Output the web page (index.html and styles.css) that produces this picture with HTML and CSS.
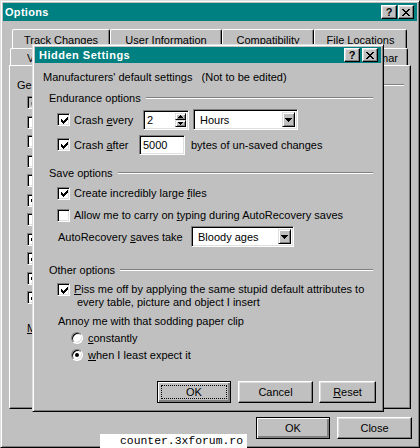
FILE: index.html
```html
<!DOCTYPE html>
<html>
<head>
<meta charset="utf-8">
<title>Options</title>
<link rel="stylesheet" href="styles.css">
</head>
<body>
<div class="screen">
  <div class="win">
    <div class="titlebar">
      <span class="title">Options</span>
      <div class="tbtns">
        <span class="tbtn">?</span>
        <span class="tbtn"><svg width="8" height="7" viewBox="0 0 8 7" shape-rendering="crispEdges"><path d="M0 0h2v1h-2zM6 0h2v1h-2zM1 1h2v1h-2zM5 1h2v1h-2zM2 2h4v1h-4zM3 3h2v1h-2zM2 4h4v1h-4zM1 5h2v1h-2zM5 5h2v1h-2zM0 6h2v1h-2zM6 6h2v1h-2z" fill="#000"/></svg></span>
      </div>
    </div>
    <div class="tabrow back">
      <div class="tab t-track">Track Changes</div>
      <div class="tab t-user">User Information</div>
      <div class="tab t-compat">Compatibility</div>
      <div class="tab t-files">File Locations</div>
    </div>
    <div class="tabrow front">
      <div class="tab t-view"><span class="clip c-view">View</span></div>
      <div class="tab t-general"></div>
      <div class="tab t-edit"></div>
      <div class="tab t-print"></div>
      <div class="tab t-save"></div>
      <div class="tab t-spell"><span class="clip c-spell"><span class="spell-txt">Spelling &amp; Grammar</span></span></div>
    </div>
    <div class="panel">
      <div class="grouphead gen"><span class="clip c-gen">General options</span><div class="etch"></div></div>
      <div class="optlist">
        <div class="opt"><span class="cb off"><svg class="chk" viewBox="0 0 7 7" width="7" height="7" shape-rendering="crispEdges"><path d="M6 0h1v1h-1zM5 1h2v1h-2zM0 2h1v1h-1zM4 2h3v1h-3zM0 3h2v1h-2zM3 3h3v1h-3zM0 4h5v1h-5zM1 5h3v1h-3zM2 6h1v1h-1z"/></svg></span></div>
        <div class="opt"><span class="cb"></span></div>
        <div class="opt"><span class="cb"></span></div>
        <div class="opt"><span class="cb"></span></div>
        <div class="opt"><span class="cb"></span></div>
        <div class="opt"><span class="cb"><svg class="chk" viewBox="0 0 7 7" width="7" height="7" shape-rendering="crispEdges"><path d="M6 0h1v1h-1zM5 1h2v1h-2zM0 2h1v1h-1zM4 2h3v1h-3zM0 3h2v1h-2zM3 3h3v1h-3zM0 4h5v1h-5zM1 5h3v1h-3zM2 6h1v1h-1z"/></svg></span></div>
        <div class="opt"><span class="cb"></span></div>
        <div class="opt"><span class="cb"><svg class="chk" viewBox="0 0 7 7" width="7" height="7" shape-rendering="crispEdges"><path d="M6 0h1v1h-1zM5 1h2v1h-2zM0 2h1v1h-1zM4 2h3v1h-3zM0 3h2v1h-2zM3 3h3v1h-3zM0 4h5v1h-5zM1 5h3v1h-3zM2 6h1v1h-1z"/></svg></span></div>
        <div class="opt"><span class="cb"><svg class="chk" viewBox="0 0 7 7" width="7" height="7" shape-rendering="crispEdges"><path d="M6 0h1v1h-1zM5 1h2v1h-2zM0 2h1v1h-1zM4 2h3v1h-3zM0 3h2v1h-2zM3 3h3v1h-3zM0 4h5v1h-5zM1 5h3v1h-3zM2 6h1v1h-1z"/></svg></span></div>
        <div class="opt"><span class="cb"><svg class="chk" viewBox="0 0 7 7" width="7" height="7" shape-rendering="crispEdges"><path d="M6 0h1v1h-1zM5 1h2v1h-2zM0 2h1v1h-1zM4 2h3v1h-3zM0 3h2v1h-2zM3 3h3v1h-3zM0 4h5v1h-5zM1 5h3v1h-3zM2 6h1v1h-1z"/></svg></span></div>
        <div class="opt"><span class="cb"><svg class="chk" viewBox="0 0 7 7" width="7" height="7" shape-rendering="crispEdges"><path d="M6 0h1v1h-1zM5 1h2v1h-2zM0 2h1v1h-1zM4 2h3v1h-3zM0 3h2v1h-2zM3 3h3v1h-3zM0 4h5v1h-5zM1 5h3v1h-3zM2 6h1v1h-1z"/></svg></span></div>
      </div>
      <div class="units"><span class="clip c-units"><u>M</u></span></div>
    </div>
    <div class="footer">
      <div class="btn default w-ok">OK</div>
      <div class="btn w-close">Close</div>
    </div>
  </div>

  <div class="dlg">
    <div class="titlebar small">
      <span class="title">Hidden Settings</span>
      <div class="tbtns">
        <span class="tbtn">?</span>
        <span class="tbtn"><svg width="8" height="7" viewBox="0 0 8 7" shape-rendering="crispEdges"><path d="M0 0h2v1h-2zM6 0h2v1h-2zM1 1h2v1h-2zM5 1h2v1h-2zM2 2h4v1h-4zM3 3h2v1h-2zM2 4h4v1h-4zM1 5h2v1h-2zM5 5h2v1h-2zM0 6h2v1h-2zM6 6h2v1h-2z" fill="#000"/></svg></span>
      </div>
    </div>
    <div class="dbody">
      <div class="row manu">Manufacturers' default settings &nbsp; (Not to be edited)</div>

      <div class="grouphead g-end"><span>Endurance options</span><div class="etch"></div></div>

      <div class="row ctl r-every">
        <span class="cb"><svg class="chk" viewBox="0 0 7 7" width="7" height="7" shape-rendering="crispEdges"><path d="M6 0h1v1h-1zM5 1h2v1h-2zM0 2h1v1h-1zM4 2h3v1h-3zM0 3h2v1h-2zM3 3h3v1h-3zM0 4h5v1h-5zM1 5h3v1h-3zM2 6h1v1h-1z"/></svg></span>
        <span class="lbl l-every">Crash <u>e</u>very</span>
        <div class="edit spin"><span class="val">2</span>
          <div class="spinbtns">
            <span class="sbtn"><svg width="5" height="3" viewBox="0 0 5 3" shape-rendering="crispEdges"><path d="M2 0h1v1h1v1h1v1h-5v-1h1v-1h1z"/></svg></span>
            <span class="sbtn"><svg width="5" height="3" viewBox="0 0 5 3" shape-rendering="crispEdges"><path d="M0 0h5v1h-1v1h-1v1h-1v-1h-1v-1h-1z"/></svg></span>
          </div>
        </div>
        <div class="combo c-hours"><span class="val">Hours</span>
          <span class="dropbtn"><svg width="7" height="4" viewBox="0 0 7 4" shape-rendering="crispEdges"><path d="M0 0h7v1h-1v1h-1v1h-1v1h-1v-1h-1v-1h-1v-1h-1z"/></svg></span>
        </div>
      </div>

      <div class="row ctl r-after">
        <span class="cb"><svg class="chk" viewBox="0 0 7 7" width="7" height="7" shape-rendering="crispEdges"><path d="M6 0h1v1h-1zM5 1h2v1h-2zM0 2h1v1h-1zM4 2h3v1h-3zM0 3h2v1h-2zM3 3h3v1h-3zM0 4h5v1h-5zM1 5h3v1h-3zM2 6h1v1h-1z"/></svg></span>
        <span class="lbl l-after">Crash <u>a</u>fter</span>
        <div class="edit e-bytes"><span class="val">5000</span></div>
        <span class="bytes">bytes of un-saved changes</span>
      </div>

      <div class="grouphead g-save"><span>Save options</span><div class="etch"></div></div>

      <div class="row chkrow r-create">
        <span class="cb"><svg class="chk" viewBox="0 0 7 7" width="7" height="7" shape-rendering="crispEdges"><path d="M6 0h1v1h-1zM5 1h2v1h-2zM0 2h1v1h-1zM4 2h3v1h-3zM0 3h2v1h-2zM3 3h3v1h-3zM0 4h5v1h-5zM1 5h3v1h-3zM2 6h1v1h-1z"/></svg></span>
        <span class="lbl">Create incredibly large <u>f</u>iles</span>
      </div>

      <div class="row chkrow r-allow">
        <span class="cb"></span>
        <span class="lbl">Allow me to carry on <u>t</u>yping during AutoRecovery saves</span>
      </div>

      <div class="row ctl r-auto">
        <span class="lbl l-auto">AutoRecovery <u>s</u>aves take</span>
        <div class="combo c-ages"><span class="val">Bloody ages</span>
          <span class="dropbtn"><svg width="7" height="4" viewBox="0 0 7 4" shape-rendering="crispEdges"><path d="M0 0h7v1h-1v1h-1v1h-1v1h-1v-1h-1v-1h-1v-1h-1z"/></svg></span>
        </div>
      </div>

      <div class="grouphead g-other"><span>Other options</span><div class="etch"></div></div>

      <div class="row chkrow r-piss">
        <span class="cb"><svg class="chk" viewBox="0 0 7 7" width="7" height="7" shape-rendering="crispEdges"><path d="M6 0h1v1h-1zM5 1h2v1h-2zM0 2h1v1h-1zM4 2h3v1h-3zM0 3h2v1h-2zM3 3h3v1h-3zM0 4h5v1h-5zM1 5h3v1h-3zM2 6h1v1h-1z"/></svg></span>
        <span class="lbl multi"><span class="ln"><u>P</u>iss me off by applying the same stupid default attributes to</span><span class="ln ln2">every table, picture and object I insert</span></span>
      </div>

      <div class="row annoy">Annoy me with that sodding paper clip</div>

      <div class="row radio r-const"><span class="rb"></span><span class="lbl"><u>c</u>onstantly</span></div>
      <div class="row radio r-when"><span class="rb on"><span class="dot"></span></span><span class="lbl"><u>w</u>hen I least expect it</span></div>

      <div class="dbtns">
        <div class="btn default b-ok"><span class="focus">OK</span></div>
        <div class="btn b-cancel">Cancel</div>
        <div class="btn b-reset"><span><u>R</u>eset</span></div>
      </div>
    </div>
  </div>

  <div class="watermark">counter.3xforum.ro</div>
</div>
</body>
</html>
```

FILE: styles.css
```css
* { box-sizing: border-box; }

html, body {
  margin: 0;
  padding: 0;
  background: #c0c0c0;
}

body {
  font-family: "Liberation Sans", Arial, sans-serif;
  font-size: 11px;
  color: #000;
}

u { text-decoration: underline; text-underline-offset: 1px; }

.screen {
  position: relative;
  width: 420px;
  height: 448px;
  overflow: hidden;
}

/* clipped fragments of labels that sit behind the dialog */
.clip {
  display: block;
  overflow: hidden;
  white-space: nowrap;
}

/* ---------- outer window ---------- */
.win {
  width: 420px;
  height: 448px;
  background: #c0c0c0;
  border: 1px solid;
  border-color: #dfdfdf #000 #000 #dfdfdf;
  box-shadow: inset 1px 1px #fff, inset -1px -1px #808080;
  padding: 2px;
  display: flex;
  flex-direction: column;
}

.titlebar {
  height: 18px;
  flex: none;
  background: #008080;
  display: flex;
  align-items: center;
  justify-content: space-between;
  padding: 0 3px 0 2px;
}

.title {
  color: #fff;
  font-weight: bold;
  font-size: 11px;
  letter-spacing: 0.3px;
}

.tbtns {
  display: flex;
  gap: 1px;
}

.tbtn {
  width: 16px;
  height: 14px;
  background: #c0c0c0;
  border: 1px solid;
  border-color: #fff #000 #000 #fff;
  box-shadow: inset -1px -1px #808080, inset 1px 1px #dfdfdf;
  display: flex;
  align-items: center;
  justify-content: center;
  font-weight: bold;
  font-size: 11px;
  line-height: 1;
  color: #000;
}

/* ---------- tabs ---------- */
.tabrow {
  display: flex;
  flex: none;
}

.tabrow.back {
  margin: 8px 0 0 9px;
  height: 19px;
}

.tabrow.front {
  margin-left: 7px;
  height: 17px;
}

.tab {
  height: 100%;
  background: #c0c0c0;
  border-top: 1px solid #fff;
  border-left: 1px solid #fff;
  border-right: 1px solid #000;
  box-shadow: inset -1px 0 #808080;
  border-radius: 2px 2px 0 0;
  text-align: center;
  white-space: nowrap;
  line-height: 14px;
}

.back .tab { padding-top: 3px; }
.front .tab { padding-top: 2px; }

.t-track { width: 98px; }
.t-user { width: 112px; }
.t-compat { width: 92px; }
.t-files { width: 93px; }

.t-view { width: 50px; padding-left: 16px; }
.t-general { width: 62px; }
.t-edit { width: 58px; }
.t-print { width: 58px; }
.t-save { width: 58px; }
.t-spell { width: 112px; display: flex; justify-content: flex-end; padding-right: 9px; }

.c-view { width: 7px; }
.c-spell { width: 16px; direction: rtl; }
.spell-txt { direction: ltr; unicode-bidi: embed; }

.panel {
  flex: none;
  height: 344px;
  margin: 0 6px 0 6px;
  border: 1px solid;
  border-color: #fff #000 #000 #fff;
  box-shadow: inset -1px -1px #808080;
  display: flex;
  flex-direction: column;
}

.grouphead {
  display: flex;
  align-items: center;
  height: 14px;
  line-height: 14px;
  white-space: nowrap;
}

.etch {
  flex: 1;
  height: 2px;
  border-top: 1px solid #808080;
  border-bottom: 1px solid #fff;
  margin-left: 5px;
}

.grouphead.gen {
  margin: 12px 6px 0 7px;
}

.c-gen { width: 16px; }

.optlist {
  margin: 1px 0 0 17px;
  width: 6px;
  overflow: hidden;
  display: flex;
  flex-direction: column;
}

.opt {
  height: 19.5px;
  display: flex;
  align-items: center;
}

.units {
  margin: 13px 0 0 17px;
  line-height: 14px;
}

.c-units { width: 6px; }

.footer {
  flex: none;
  display: flex;
  justify-content: flex-end;
  gap: 7px;
  margin-top: 8px;
  padding-right: 5px;
}

/* ---------- controls ---------- */
.cb {
  flex: none;
  width: 13px;
  height: 13px;
  background: #fff;
  border: 1px solid;
  border-color: #808080 #fff #fff #808080;
  box-shadow: inset 1px 1px #000, inset -1px -1px #dfdfdf;
  display: flex;
  align-items: center;
  justify-content: center;
  padding: 1px 0 0 1px;
}

.cb.off { background: #c0c0c0; }
.cb.off .chk path { fill: #808080; }

.chk { display: block; }
.chk path { fill: #000; }

.rb {
  flex: none;
  width: 12px;
  height: 12px;
  border-radius: 50%;
  background: #fff;
  border: 1px solid;
  border-color: #808080 #fff #fff #808080;
  box-shadow: inset 1px 1px #000, inset -1px -1px #dfdfdf;
  display: flex;
  align-items: center;
  justify-content: center;
}

.dot {
  width: 4px;
  height: 4px;
  border-radius: 50%;
  background: #000;
}

.edit, .combo {
  flex: none;
  background: #fff;
  border: 1px solid;
  border-color: #808080 #fff #fff #808080;
  box-shadow: inset 1px 1px #000, inset -1px -1px #dfdfdf;
  display: flex;
  align-items: center;
  padding: 2px;
  white-space: nowrap;
}

.edit .val { padding-left: 1px; flex: 1; }
.combo .val { padding-left: 4px; flex: 1; }

.spinbtns {
  display: flex;
  flex-direction: column;
  align-self: stretch;
}

.sbtn {
  width: 11px;
  flex: 1;
  background: #c0c0c0;
  border: 1px solid;
  border-color: #dfdfdf #000 #000 #dfdfdf;
  box-shadow: inset 1px 1px #fff, inset -1px -1px #808080;
  display: flex;
  align-items: center;
  justify-content: center;
}

.sbtn svg path, .dropbtn svg path { fill: #000; }

.dropbtn {
  width: 13px;
  align-self: stretch;
  background: #c0c0c0;
  border: 1px solid;
  border-color: #dfdfdf #000 #000 #dfdfdf;
  box-shadow: inset 1px 1px #fff, inset -1px -1px #808080;
  display: flex;
  align-items: center;
  justify-content: center;
}

.btn {
  flex: none;
  height: 22px;
  background: #c0c0c0;
  border: 1px solid;
  border-color: #fff #000 #000 #fff;
  box-shadow: inset -1px -1px #808080, inset 1px 1px #dfdfdf;
  display: flex;
  align-items: center;
  justify-content: center;
  line-height: 14px;
}

.btn.default {
  border-color: #000;
  box-shadow: inset 1px 1px #fff, inset -1px -1px #808080, inset -2px -2px #808080;
}

.w-ok { width: 74px; }
.w-close { width: 75px; }

/* ---------- hidden settings dialog ---------- */
.dlg {
  position: absolute;
  left: 32px;
  top: 44px;
  width: 352px;
  height: 368px;
  background: #c0c0c0;
  border: 1px solid;
  border-color: #dfdfdf #000 #000 #dfdfdf;
  box-shadow: inset 1px 1px #fff, inset -1px -1px #808080;
  padding: 2px;
  display: flex;
  flex-direction: column;
}

.titlebar.small {
  height: 16px;
  padding: 0 3px 0 4px;
}

.titlebar.small .title { letter-spacing: 0.5px; }

.titlebar.small .tbtns { gap: 2px; }

.dbody {
  flex: 1;
  display: flex;
  flex-direction: column;
  padding-bottom: 6px;
}

.row {
  display: flex;
  align-items: center;
  white-space: nowrap;
  line-height: 14px;
}

.manu { margin: 7px 0 0 8px; height: 14px; }

.grouphead.g-end { margin: 7px 8px 0 14px; }
.grouphead.g-save { margin: 11px 8px 0 14px; }
.grouphead.g-other { margin: 16px 8px 0 14px; }

.ctl { height: 21px; }
.r-every { margin: 4px 0 0 22px; }
.r-after { margin: 4px 0 0 22px; }

.ctl .lbl, .chkrow .lbl { margin-left: 4px; }

.l-every { width: 69px; }
.l-after { width: 65px; }

.spin { width: 46px; height: 20px; }
.c-hours { width: 105px; height: 21px; margin-left: 4px; }
.e-bytes { width: 46px; height: 20px; }
.bytes { margin-left: 6px; }

.chkrow { height: 16px; margin-left: 22px; }
.r-create { margin-top: 5px; }
.r-allow { margin-top: 6px; }

.r-auto { margin: 3px 0 0 23px; }
.r-auto .l-auto { margin-left: 0; width: 133px; }
.c-ages { width: 103px; height: 21px; }

.r-piss {
  margin-top: 6px;
  height: auto;
  align-items: flex-start;
}

.multi {
  display: flex;
  flex-direction: column;
  line-height: 13px;
}

.ln2 { padding-left: 3px; }

.annoy { margin: 5px 0 0 23px; height: 14px; }

.radio { height: 16px; margin-left: 36px; }
.radio .lbl { margin-left: 5px; }
.r-const { margin-top: 2px; }
.r-when { margin-top: 1px; }

.dbtns {
  margin-top: auto;
  display: flex;
  justify-content: flex-end;
  padding-right: 5px;
}

.b-ok { width: 74px; }
.b-cancel { width: 75px; margin-left: 7px; }
.b-reset { width: 57px; margin-left: 6px; }

.focus {
  align-self: stretch;
  flex: 1;
  margin: 3px;
  border: 1px dotted #000;
  display: flex;
  align-items: center;
  justify-content: center;
}

/* ---------- watermark overlay ---------- */
.watermark {
  position: absolute;
  left: 100px;
  top: 434px;
  width: 147px;
  height: 14px;
  background: #fff;
  font-family: "Liberation Mono", "Courier New", monospace;
  font-size: 11.4px;
  line-height: 14px;
  padding-left: 20px;
  color: #000;
  white-space: nowrap;
}
```
